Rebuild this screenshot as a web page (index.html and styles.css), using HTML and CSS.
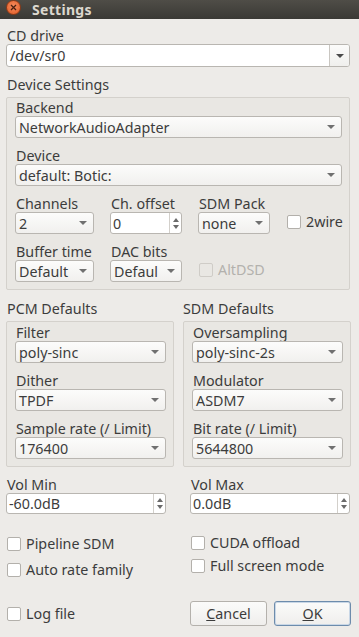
FILE: index.html
```html
<!DOCTYPE html>
<html lang="en">
<head>
  <meta charset="UTF-8" />
  <title>Settings</title>
  <link rel="stylesheet" href="styles.css">
</head>
<body>
  <div class="titlebar">
    <div class="close">
      <svg width="7" height="7" viewBox="0 0 7 7"><path d="M1 1 L6 6 M6 1 L1 6" stroke="#4a2010" stroke-width="1.3"/></svg>
    </div>
    <div class="title">Settings</div>
  </div>

  <div class="content">
    <div class="field">
      <label>CD drive</label>
      <div class="edit-combo"><span>/dev/sr0</span><div class="btn"><i class="arrow dark"></i></div></div>
    </div>

    <div class="field">
      <label>Device Settings</label>
      <div class="group device">
        <div class="field">
          <label>Backend</label>
          <div class="combo"><span>NetworkAudioAdapter</span><i class="arrow"></i></div>
        </div>
        <div class="field">
          <label>Device</label>
          <div class="combo"><span>default: Botic:</span><i class="arrow"></i></div>
        </div>
        <div class="grid4">
          <div class="field">
            <label>Channels</label>
            <div class="combo"><span>2</span><i class="arrow"></i></div>
          </div>
          <div class="field">
            <label>Ch. offset</label>
            <div class="spin"><span>0</span><div class="spin-btns"><i class="up"></i><i class="down"></i></div></div>
          </div>
          <div class="field">
            <label>SDM Pack</label>
            <div class="combo"><span>none</span><i class="arrow"></i></div>
          </div>
          <div class="check-cell"><span class="check"><i class="box"></i>2wire</span></div>
          <div class="field">
            <label>Buffer time</label>
            <div class="combo"><span>Default</span><i class="arrow"></i></div>
          </div>
          <div class="field">
            <label>DAC bits</label>
            <div class="combo"><span>Defaul</span><i class="arrow"></i></div>
          </div>
          <div class="check-cell third"><span class="check disabled"><i class="box"></i>AltDSD</span></div>
        </div>
      </div>
    </div>

    <div class="defaults">
      <div class="field">
        <label>PCM Defaults</label>
        <div class="group col">
          <div class="field">
            <label>Filter</label>
            <div class="combo"><span>poly-sinc</span><i class="arrow"></i></div>
          </div>
          <div class="field">
            <label>Dither</label>
            <div class="combo"><span>TPDF</span><i class="arrow"></i></div>
          </div>
          <div class="field">
            <label>Sample rate (/ Limit)</label>
            <div class="combo"><span>176400</span><i class="arrow"></i></div>
          </div>
        </div>
      </div>
      <div class="field">
        <label>SDM Defaults</label>
        <div class="group col">
          <div class="field">
            <label>Oversampling</label>
            <div class="combo"><span>poly-sinc-2s</span><i class="arrow"></i></div>
          </div>
          <div class="field">
            <label>Modulator</label>
            <div class="combo"><span>ASDM7</span><i class="arrow"></i></div>
          </div>
          <div class="field">
            <label>Bit rate (/ Limit)</label>
            <div class="combo"><span>5644800</span><i class="arrow"></i></div>
          </div>
        </div>
      </div>
    </div>

    <div class="vols">
      <div class="field">
        <label>Vol Min</label>
        <div class="spin wide"><span>-60.0dB</span><div class="spin-btns"><i class="up"></i><i class="down"></i></div></div>
      </div>
      <div class="field">
        <label>Vol Max</label>
        <div class="spin wide"><span>0.0dB</span><div class="spin-btns"><i class="up"></i><i class="down"></i></div></div>
      </div>
    </div>

    <div class="options">
      <div class="opt-col left">
        <span class="check"><i class="box"></i>Pipeline SDM</span>
        <span class="check"><i class="box"></i>Auto rate family</span>
      </div>
      <div class="opt-col right">
        <span class="check"><i class="box"></i>CUDA offload</span>
        <span class="check"><i class="box"></i>Full screen mode</span>
      </div>
    </div>

    <div class="bottom">
      <span class="check"><i class="box"></i>Log file</span>
      <div class="buttons">
        <button class="button"><u>C</u>ancel</button>
        <button class="button default"><u>O</u>K</button>
      </div>
    </div>
  </div>
</body>
</html>
```

FILE: styles.css
```css
* {
  box-sizing: border-box;
}

html, body {
  margin: 0;
  padding: 0;
}

body {
  width: 359px;
  height: 637px;
  overflow: hidden;
  background: #edebe8;
  font-family: 'Noto Sans', 'DejaVu Sans', sans-serif;
  font-size: 14.3px;
  color: #3c3c3c;
}

.titlebar {
  height: 19px;
  background: linear-gradient(#4f4d47, #3a3935);
  display: flex;
  align-items: center;
  gap: 11px;
  padding-left: 6px;
}

.close {
  width: 15px;
  height: 15px;
  margin-top: -4px;
  border-radius: 50%;
  background: radial-gradient(circle at 50% 40%, #f68d5e, #df5a24);
  border: 1px solid #8e3a16;
  display: flex;
  align-items: center;
  justify-content: center;
}

.title {
  color: #dcd8cf;
  font-weight: bold;
  font-size: 14px;
  line-height: 19px;
  letter-spacing: 0.3px;
}

.content {
  padding: 9px 9px 0 6px;
  display: flex;
  flex-direction: column;
  gap: 10px;
}

.field {
  display: flex;
  flex-direction: column;
}

label {
  line-height: 16px;
  padding-left: 1px;
}

.group {
  margin-top: 4px;
  border: 1px solid #d4d1cc;
  border-radius: 2px;
  background: #e9e7e3;
  display: flex;
  flex-direction: column;
  gap: 10px;
}

.group.device {
  padding: 2px 7px 7px 8px;
}

.group.col {
  padding: 3px 7px 7px 8px;
}

.combo, .edit-combo, .spin {
  height: 22px;
  border: 1px solid #b9b6b1;
  border-radius: 3px;
  display: flex;
  align-items: center;
  justify-content: space-between;
  white-space: nowrap;
  overflow: hidden;
}

.combo {
  background: linear-gradient(#fcfcfb, #f1f0ee);
  padding: 0 6px 0 3px;
}

.arrow {
  flex: none;
  width: 0;
  height: 0;
  border-left: 4px solid transparent;
  border-right: 4px solid transparent;
  border-top: 4px solid #707070;
}

.arrow.dark {
  border-top-color: #4a4a4a;
}

.edit-combo {
  height: 23px;
  background: #fff;
  padding-left: 3px;
}

.edit-combo .btn {
  width: 20px;
  height: 100%;
  border-left: 1px solid #c9c6c1;
  background: linear-gradient(#fbfbfa, #f0efed);
  display: flex;
  align-items: center;
  justify-content: center;
}

.spin {
  background: #fff;
  padding-left: 2px;
}

.spin.wide {
  height: 21px;
}

.spin-btns {
  flex: none;
  width: 12px;
  height: 100%;
  border-left: 1px solid #d3d0cb;
  display: flex;
  flex-direction: column;
  align-items: center;
  justify-content: center;
  gap: 3px;
}

.spin-btns .up {
  border-left: 3px solid transparent;
  border-right: 3px solid transparent;
  border-bottom: 4px solid #6a6a6a;
}

.spin-btns .down {
  border-left: 3px solid transparent;
  border-right: 3px solid transparent;
  border-top: 4px solid #6a6a6a;
}

.grid4 {
  display: grid;
  grid-template-columns: 79px 72px 72px auto;
  column-gap: 16px;
  row-gap: 10px;
}

.check-cell {
  display: flex;
  align-items: flex-end;
  padding-bottom: 4px;
  padding-left: 1px;
}

.check-cell.third {
  grid-column: 3;
}

.check {
  display: flex;
  align-items: center;
  gap: 5px;
  line-height: 16px;
  white-space: nowrap;
}

.box {
  width: 14px;
  height: 14px;
  border: 1px solid #b3b0ab;
  border-radius: 2px;
  background: #fff;
}

.check.disabled {
  color: #b3b1ad;
}

.check.disabled .box {
  background: transparent;
  border-color: #cfccc7;
}

.defaults {
  display: grid;
  grid-template-columns: 168px 168px;
  column-gap: 9px;
  margin-top: 1px;
}

.defaults > .field + .field > label {
  padding-left: 0;
}

.vols {
  display: grid;
  grid-template-columns: 160px 160px;
  column-gap: 24px;
}

.options {
  display: grid;
  grid-template-columns: 184px auto;
  margin-top: 12px;
}

.opt-col {
  display: flex;
  flex-direction: column;
  padding-left: 1px;
}

.opt-col.left {
  gap: 10px;
}

.opt-col.right {
  gap: 7px;
  margin-top: -1px;
}

.bottom {
  display: grid;
  grid-template-columns: 184px auto;
  align-items: center;
  margin-top: 13px;
}

.bottom > .check {
  padding-left: 1px;
}

.buttons {
  display: flex;
  gap: 7px;
}

.button {
  width: 77px;
  height: 25px;
  font-family: inherit;
  font-size: 14.3px;
  color: #3c3c3c;
  border: 1px solid #b4b1ac;
  border-radius: 3px;
  background: linear-gradient(#fbfbfa, #efeeec);
  padding: 0;
}

.button.default {
  border-color: #6d8cac;
  box-shadow: inset 0 0 0 1px #c9d7e6;
}
```
